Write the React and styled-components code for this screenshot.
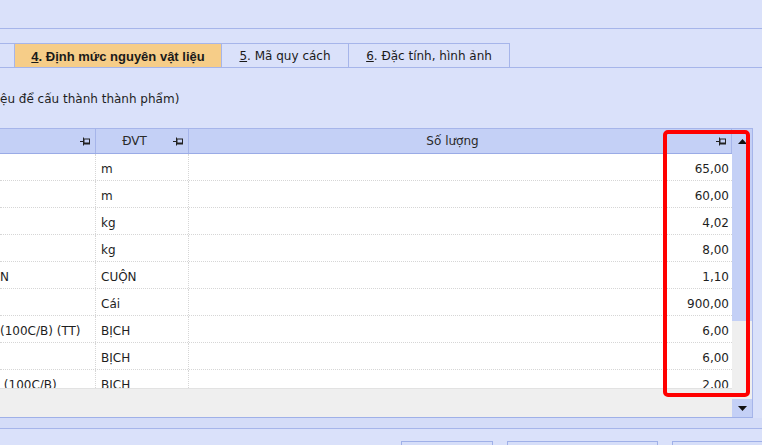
import React from "react";
import styled, { createGlobalStyle } from "styled-components";

const GlobalStyle = createGlobalStyle`
  html, body {
    margin: 0;
    padding: 0;
    background: #dae1fa;
  }
  body {
    font-family: "DejaVu Sans", Verdana, sans-serif;
    font-size: 12px;
    color: #1e1e1e;
  }
`;

const rows = [
  { name: "", unit: "m", qty: "65,00" },
  { name: "", unit: "m", qty: "60,00" },
  { name: "", unit: "kg", qty: "4,02" },
  { name: "", unit: "kg", qty: "8,00" },
  { name: "N", unit: "CUỘN", qty: "1,10" },
  { name: "", unit: "Cái", qty: "900,00" },
  { name: "(100C/B) (TT)", unit: "BỊCH", qty: "6,00" },
  { name: "", unit: "BỊCH", qty: "6,00" },
  { name: "\u00a0(100C/B)", unit: "BỊCH", qty: "2,00" },
];

const tabs = [
  { key: "3", label: "", width: 15, partial: true },
  { key: "4", label: ". Định mức nguyên vật liệu", width: 208, active: true },
  { key: "5", label: ". Mã quy cách", width: 128 },
  { key: "6", label: ". Đặc tính, hình ảnh", width: 162 },
];

const Page = styled.div`
  position: relative;
  width: 762px;
  height: 445px;
  overflow: hidden;
  background: #dae1fa;
  display: flex;
  flex-direction: column;
  & > * {
    flex-shrink: 0;
  }
`;

const TopBar = styled.div`
  height: 28px;
  border-bottom: 1px solid #a6b5ea;
`;

const TabStrip = styled.div`
  margin-top: 14px;
  height: 24px;
  display: flex;
  border-bottom: 1px solid #a6b5ea;
`;

const Tab = styled.div`
  width: ${(p) => p.$w}px;
  box-sizing: border-box;
  border: 1px solid #a6b5ea;
  border-left: ${(p) => (p.$partial ? "none" : "1px solid #a6b5ea")};
  border-bottom: none;
  margin-left: ${(p) => (p.$first ? "0" : "-1px")};
  background: ${(p) => (p.$active ? "#f6cd88" : "#dae1fa")};
  font-family: ${(p) => (p.$active ? '"Liberation Sans", Arial, sans-serif' : "inherit")};
  font-size: ${(p) => (p.$active ? "13px" : "12px")};
  font-weight: ${(p) => (p.$active ? "bold" : "normal")};
  color: #1a1a1a;
  display: flex;
  align-items: center;
  justify-content: center;
  padding-top: 1px;
  white-space: nowrap;
  u {
    text-decoration: underline;
  }
`;

const Caption = styled.div`
  height: 60px;
  display: flex;
  align-items: center;
  padding-top: 1px;
  box-sizing: border-box;
  white-space: nowrap;
`;

const GridPanel = styled.div`
  margin-right: 9px;
  height: 288px;
  display: flex;
  border-top: 1px solid #a6b5ea;
  border-right: 1px solid #a6b5ea;
  border-bottom: 1px solid #9fb0e8;
`;

const TableArea = styled.div`
  flex: 1;
  display: flex;
  flex-direction: column;
  min-width: 0;
`;

const HeaderRow = styled.div`
  height: 24px;
  display: flex;
  background: #c4d0f6;
  border-bottom: 1px solid #9aabe6;
  flex-shrink: 0;
`;

const HeadCell = styled.div`
  width: ${(p) => (p.$w ? `${p.$w}px` : "auto")};
  flex: ${(p) => (p.$w ? "none" : "1")};
  box-sizing: border-box;
  border-right: 1px solid #a6b5ea;
  display: flex;
  align-items: center;
  padding-right: 4px;
  color: #2a2a2a;
`;

const HeadLabel = styled.span`
  flex: 1;
  text-align: center;
`;

const Body = styled.div`
  height: 234px;
  flex-shrink: 0;
  overflow: hidden;
  background: #ffffff;
`;

const Row = styled.div`
  height: 27px;
  display: flex;
  box-sizing: border-box;
  border-bottom: 1px dotted #d6d6d6;
`;

const Cell = styled.div`
  width: ${(p) => (p.$w ? `${p.$w}px` : "auto")};
  flex: ${(p) => (p.$w ? "none" : "1")};
  box-sizing: border-box;
  border-right: ${(p) => (p.$last ? "none" : "1px dotted #d6d6d6")};
  display: flex;
  align-items: center;
  justify-content: ${(p) => (p.$right ? "flex-end" : "flex-start")};
  padding: ${(p) => (p.$right ? "3px 3px 0 0" : p.$pad ? "3px 0 0 5px" : "3px 0 0 0")};
  white-space: nowrap;
  overflow: hidden;
  color: #1e1e1e;
`;

const Footer = styled.div`
  flex: 1;
  background: #efefef;
  border-top: 1px solid #e2e2e2;
`;

const ScrollBar = styled.div`
  width: 20px;
  display: flex;
  flex-direction: column;
  background: #efefef;
`;

const ScrollButton = styled.div`
  height: ${(p) => p.$h}px;
  background: #c4d0f6;
  display: flex;
  align-items: center;
  justify-content: center;
  flex-shrink: 0;
`;

const Thumb = styled.div`
  height: 168px;
  background: #c4d0f6;
  flex-shrink: 0;
`;

const Track = styled.div`
  flex: 1;
`;

const Band = styled.div`
  height: 10px;
  background: #d4dcf8;
  border-bottom: 1px solid #a6b5ea;
`;

const ButtonRow = styled.div`
  margin-top: 12px;
  display: flex;
  padding-left: 401px;
  gap: 14px;
`;

const Button = styled.div`
  width: ${(p) => p.$w}px;
  height: 28px;
  box-sizing: border-box;
  border: 1px solid #9fb0e8;
  background: #d6def9;
  flex-shrink: 0;
`;

const Highlight = styled.div`
  position: absolute;
  left: 663px;
  top: 130px;
  width: 87px;
  height: 267px;
  box-sizing: border-box;
  border: 4px solid #ff0000;
  border-radius: 5px;
  pointer-events: none;
`;

const Pin = () => (
  <svg width="11" height="9" viewBox="0 0 11 9">
    <line x1="0" y1="4.5" x2="3" y2="4.5" stroke="#222" strokeWidth="1" />
    <line x1="3.5" y1="0.5" x2="3.5" y2="8.5" stroke="#222" strokeWidth="1" />
    <rect x="4" y="2" width="5.5" height="5" fill="none" stroke="#222" strokeWidth="1" />
    <rect x="4" y="5.5" width="6" height="1.5" fill="#222" />
  </svg>
);

const Arrow = ({ down }) => (
  <svg width="9" height="5" viewBox="0 0 9 5">
    <polygon points={down ? "0,0 9,0 4.5,5" : "0,5 9,5 4.5,0"} fill="#111" />
  </svg>
);

export default function App() {
  return (
    <>
      <GlobalStyle />
      <Page>
        <TopBar />
        <TabStrip>
          {tabs.map((t, i) => (
            <Tab key={t.key} $w={t.width} $active={t.active} $partial={t.partial} $first={i === 0}>
              {t.label && (
                <span>
                  <u>{t.key}</u>
                  {t.label}
                </span>
              )}
            </Tab>
          ))}
        </TabStrip>
        <Caption>ệu để cấu thành thành phẩm)</Caption>
        <GridPanel>
          <TableArea>
            <HeaderRow>
              <HeadCell $w={96}>
                <HeadLabel />
                <Pin />
              </HeadCell>
              <HeadCell $w={93}>
                <HeadLabel>ĐVT</HeadLabel>
                <Pin />
              </HeadCell>
              <HeadCell>
                <HeadLabel>Số lượng</HeadLabel>
                <Pin />
              </HeadCell>
            </HeaderRow>
            <Body>
              {rows.map((r, i) => (
                <Row key={i}>
                  <Cell $w={96}>{r.name}</Cell>
                  <Cell $w={93} $pad>
                    {r.unit}
                  </Cell>
                  <Cell $right $last>
                    {r.qty}
                  </Cell>
                </Row>
              ))}
            </Body>
            <Footer />
          </TableArea>
          <ScrollBar>
            <ScrollButton $h={24}>
              <Arrow />
            </ScrollButton>
            <Thumb />
            <Track />
            <ScrollButton $h={18}>
              <Arrow down />
            </ScrollButton>
          </ScrollBar>
        </GridPanel>
        <Band />
        <ButtonRow>
          <Button $w={92} />
          <Button $w={151} />
          <Button $w={100} />
        </ButtonRow>
        <Highlight />
      </Page>
    </>
  );
}
